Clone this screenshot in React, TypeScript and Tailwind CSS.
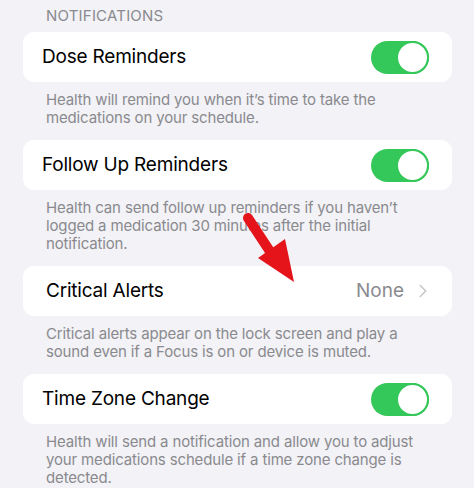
import { ChevronRight } from 'lucide-react';

type Row = {
  title: string;
  footer: string;
  value?: string;
  indent?: boolean;
};

const rows: Row[] = [
  {
    title: 'Dose Reminders',
    footer: 'Health will remind you when it\u2019s time to take the medications on your schedule.',
  },
  {
    title: 'Follow Up Reminders',
    footer:
      'Health can send follow up reminders if you haven\u2019t logged a medication 30 minutes after the initial notification.',
  },
  {
    title: 'Critical Alerts',
    value: 'None',
    indent: true,
    footer: 'Critical alerts appear on the lock screen and play a sound even if a Focus is on or device is muted.',
  },
  {
    title: 'Time Zone Change',
    footer:
      'Health will send a notification and allow you to adjust your medications schedule if a time zone change is detected.',
  },
];

function Toggle() {
  return (
    <div className="mr-[1px] flex h-[33px] w-[58px] items-center justify-end rounded-full bg-[#34c759]">
      <div className="h-[33px] w-[33px] rounded-full border-2 border-[#34c759] bg-white" />
    </div>
  );
}

export default function App() {
  return (
    <div
      className="relative h-[488px] w-[474px] overflow-hidden bg-[#f2f2f7] pl-[23px] pr-[22px]"
      style={{ fontFamily: 'Inter, "Noto Sans", sans-serif' }}
    >
      <div className="pl-[23px] pt-[7px] text-[15px] leading-[18px] tracking-[0.2px] text-[#8a8a8e]">
        NOTIFICATIONS
      </div>

      <div className="mt-[7px] flex flex-col gap-[13px]">
        {rows.map((row) => (
          <div key={row.title}>
            <div
              className={`flex h-[50px] items-center justify-between rounded-[11px] bg-white ${
                row.indent ? 'pl-[23px] pr-[18px]' : 'pl-[19px] pr-[22px]'
              }`}
            >
              <span className="text-[19px] tracking-[-0.2px] text-black">{row.title}</span>
              {row.value ? (
                <span className="flex items-center gap-[8px] text-[19px] text-[#8a8a8e]">
                  {row.value}
                  <ChevronRight size={22} strokeWidth={1.6} className="text-[#c4c4c7]" />
                </span>
              ) : (
                <Toggle />
              )}
            </div>
            <p className="px-[23px] pt-[9px] text-[15px] leading-[18px] tracking-[-0.15px] text-[#8a8a8e]">
              {row.footer}
            </p>
          </div>
        ))}
      </div>

      {/* red callout arrow pointing at the Critical Alerts row */}
      <svg className="absolute left-[238px] top-[207px]" width="64" height="80" viewBox="0 0 64 80">
        <line x1="10" y1="11" x2="33" y2="46" stroke="#e5141b" strokeWidth="10" strokeLinecap="round" />
        <polygon points="20,51 47,32 56,75" fill="#e5141b" />
      </svg>
    </div>
  );
}
